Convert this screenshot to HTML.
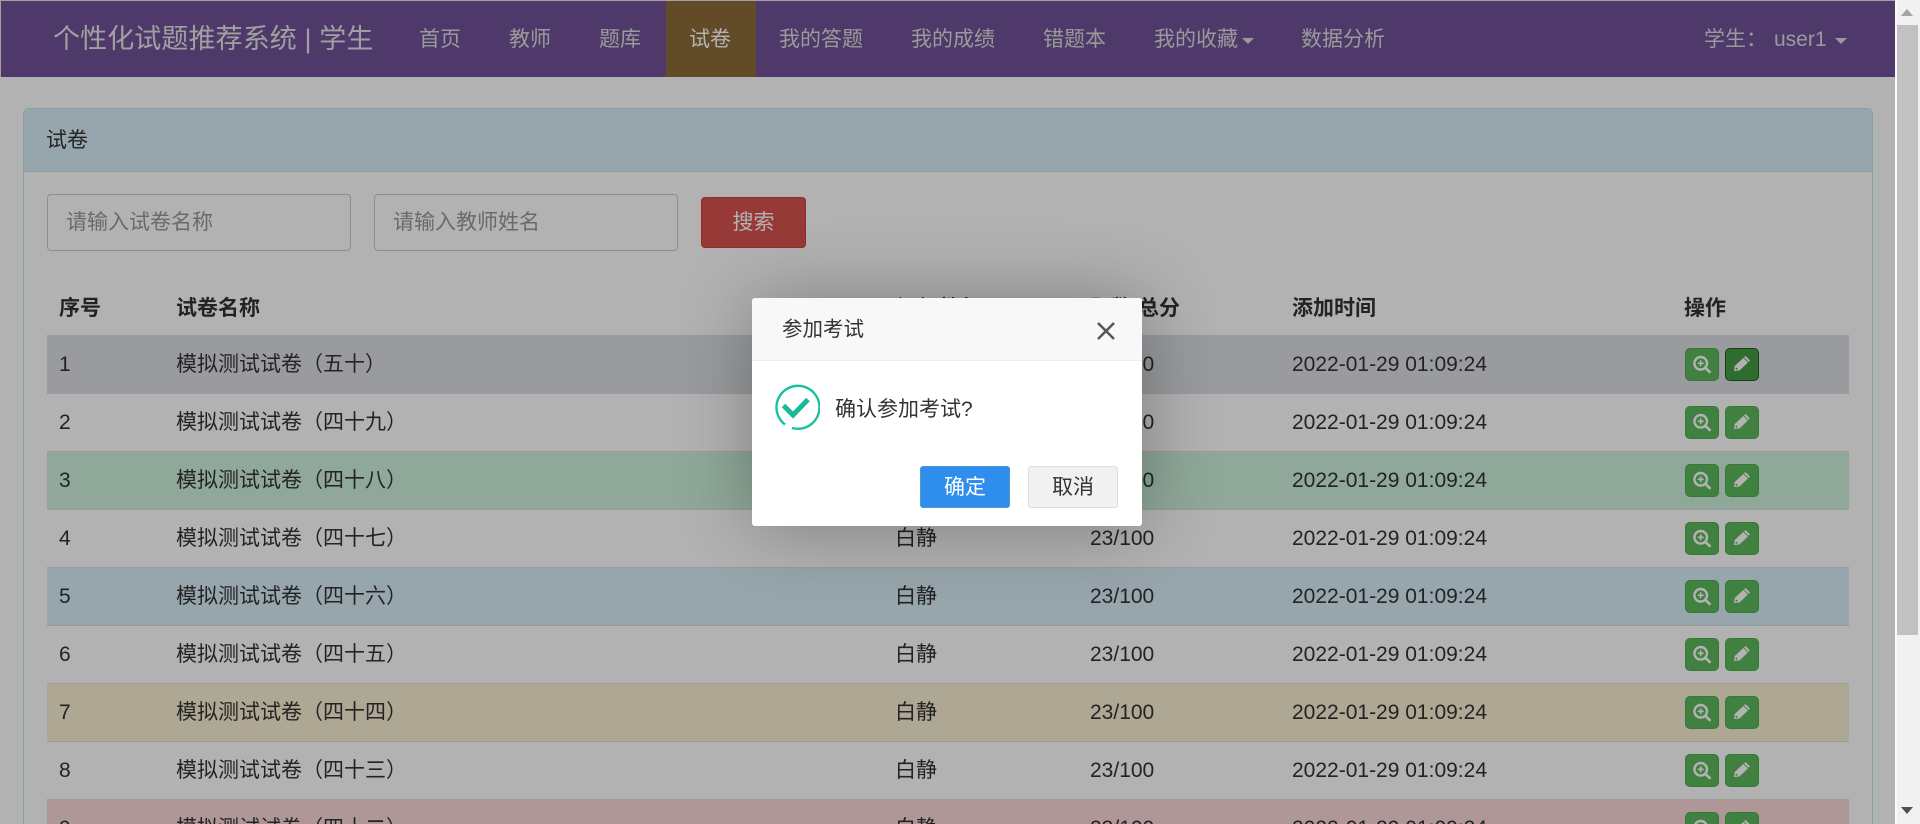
<!DOCTYPE html>
<html lang="zh-CN">
<head>
<meta charset="utf-8">
<title>试卷</title>
<style>
*{box-sizing:border-box}
html,body{margin:0;padding:0;width:1920px;height:824px;overflow:hidden;background:#fff;
font-family:"Liberation Sans","Noto Sans CJK SC",sans-serif;font-size:21px;color:#333}
.a{position:absolute;white-space:nowrap}
#page{position:absolute;left:0;top:0;width:1895px;height:824px;overflow:hidden;background:#fff}
#nav{position:absolute;left:0;top:0;width:1895px;height:77px;background:#705298;border:1px solid #e7e7e7;border-width:1px 0 0 1px}
.n{position:absolute;top:0;height:77px;line-height:80px;color:#ddd;white-space:nowrap}
#act{position:absolute;left:666px;top:1px;width:90px;height:76px;background:#8d6c39}
.caret{position:absolute;width:0;height:0;border-left:6px solid transparent;border-right:6px solid transparent;border-top:6px solid #ddd}
#panel{position:absolute;left:23px;top:108px;width:1850px;height:716px;border:1px solid #bce8f1;border-bottom:0;border-radius:6px 6px 0 0;background:#fff}
#ph{position:absolute;left:0;top:0;width:1848px;height:63px;background:#d9edf7;border-bottom:1px solid #bce8f1;border-radius:5px 5px 0 0}
.inp{position:absolute;top:194px;width:304px;height:57px;border:1px solid #ccc;border-radius:4px;background:#fff;color:#999;line-height:56px;padding-left:18px;white-space:nowrap}
#sb{position:absolute;left:701px;top:197px;width:105px;height:51px;background:#d9534f;border:1px solid #d43f3a;border-radius:4px;color:#fff;text-align:center;line-height:50px}
.th{position:absolute;top:291px;height:36px;line-height:36px;font-weight:bold;white-space:nowrap}
.row{position:absolute;left:47px;width:1802px;height:58px;border-top:1px solid #ddd;overflow:hidden}
.c{position:absolute;top:0;height:57px;line-height:57px;white-space:nowrap}
.b{position:absolute;top:12px;width:34px;height:33px;background:#5cb85c;border:1px solid #4cae4c;border-radius:5px}
.b svg{position:absolute;left:-1px;top:-1px}
#ov{position:absolute;left:0;top:0;width:1895px;height:824px;background:rgba(0,0,0,.3)}
#m{position:absolute;left:752px;top:298px;width:390px;height:228px;background:#fff;border-radius:3px;box-shadow:1.5px 1.5px 75px rgba(0,0,0,.3);overflow:hidden}
#mh{position:absolute;left:0;top:0;width:390px;height:63px;background:#f8f8f8;border-bottom:1px solid #eee;line-height:64px;padding-left:30px;color:#333;font-size:20.5px}
.mb{position:absolute;top:168px;width:90px;height:42px;border-radius:3px;text-align:center;line-height:41px;font-size:21px}
#sbar{position:absolute;left:1895px;top:0;width:25px;height:824px;background:#f1f1f1;border-left:2px solid #fbfbfb}
#thumb{position:absolute;left:0;top:25px;width:21px;height:610px;background:#c1c1c1}
</style>
</head>
<body>
<div id="page">
  <div id="nav"></div>
  <div id="act"></div>
  <div class="n" style="left:53px;font-size:27px;line-height:79px;color:#e6e6e6;letter-spacing:.1px">个性化试题推荐系统 | 学生</div>
  <div class="n" style="left:419px">首页</div>
  <div class="n" style="left:509px">教师</div>
  <div class="n" style="left:599px">题库</div>
  <div class="n" style="left:689px;color:#fff">试卷</div>
  <div class="n" style="left:779px">我的答题</div>
  <div class="n" style="left:911px">我的成绩</div>
  <div class="n" style="left:1043px">错题本</div>
  <div class="n" style="left:1154px">我的收藏</div>
  <div class="caret" style="left:1242px;top:38px"></div>
  <div class="n" style="left:1301px">数据分析</div>
  <div class="n" style="left:1704px">学生：</div>
  <div class="n" style="left:1774px">user1</div>
  <div class="caret" style="left:1835px;top:38px"></div>

  <div id="panel"><div id="ph"></div></div>
  <div class="a" style="left:46px;top:123px;line-height:36px;height:36px">试卷</div>
  <div class="inp" style="left:47px">请输入试卷名称</div>
  <div class="inp" style="left:374px">请输入教师姓名</div>
  <div id="sb">搜索</div>

  <div class="th" style="left:59px">序号</div>
  <div class="th" style="left:176px">试卷名称</div>
  <div class="th" style="left:897px">添加教师</div>
  <div class="th" style="left:1090px">题数/总分</div>
  <div class="th" style="left:1292px">添加时间</div>
  <div class="th" style="left:1684px">操作</div>

  <div class="row" style="top:335px;background:#dbdfe3">
    <div class="c" style="left:12px">1</div><div class="c" style="left:129px">模拟测试试卷（五十）</div><div class="c" style="left:848px">白静</div><div class="c" style="left:1043px">23/100</div><div class="c" style="left:1245px">2022-01-29 01:09:24</div>
    <div class="b" style="left:1638px"><svg width="34" height="33" viewBox="0 0 34 33"><circle cx="15.7" cy="15.3" r="6.3" fill="none" stroke="#fff" stroke-width="2.4"/><path d="M12.7 15.300h6M15.700 12.300v6" stroke="#fff" stroke-width="1.6"/><path d="M20.500 20l5 4.800" stroke="#fff" stroke-width="2.6"/></svg></div>
    <div class="b" style="left:1678px;background:#449d44;border-color:#255625"><svg width="34" height="33" viewBox="0 0 34 33"><path d="M9 23l.7-5L20.500 8 25 12.500 14.500 22.500z" fill="#fff"/><path d="M18.700 9.700l4.500 4.500" stroke="#449d44" stroke-width=".8"/><circle cx="11.500" cy="20.800" r="1" fill="#449d44"/></svg></div>
  </div>
  <div class="row" style="top:393px">
    <div class="c" style="left:12px">2</div><div class="c" style="left:129px">模拟测试试卷（四十九）</div><div class="c" style="left:848px">白静</div><div class="c" style="left:1043px">23/100</div><div class="c" style="left:1245px">2022-01-29 01:09:24</div>
    <div class="b" style="left:1638px"><svg width="34" height="33" viewBox="0 0 34 33"><circle cx="15.7" cy="15.3" r="6.3" fill="none" stroke="#fff" stroke-width="2.4"/><path d="M12.7 15.300h6M15.700 12.300v6" stroke="#fff" stroke-width="1.6"/><path d="M20.500 20l5 4.800" stroke="#fff" stroke-width="2.6"/></svg></div>
    <div class="b" style="left:1678px"><svg width="34" height="33" viewBox="0 0 34 33"><path d="M9 23l.7-5L20.500 8 25 12.500 14.500 22.500z" fill="#fff"/><path d="M18.700 9.700l4.500 4.500" stroke="#5cb85c" stroke-width=".8"/><circle cx="11.500" cy="20.800" r="1" fill="#5cb85c"/></svg></div>
  </div>
  <div class="row" style="top:451px;background:#cdf1dc">
    <div class="c" style="left:12px">3</div><div class="c" style="left:129px">模拟测试试卷（四十八）</div><div class="c" style="left:848px">白静</div><div class="c" style="left:1043px">23/100</div><div class="c" style="left:1245px">2022-01-29 01:09:24</div>
    <div class="b" style="left:1638px"><svg width="34" height="33" viewBox="0 0 34 33"><circle cx="15.7" cy="15.3" r="6.3" fill="none" stroke="#fff" stroke-width="2.4"/><path d="M12.7 15.300h6M15.700 12.300v6" stroke="#fff" stroke-width="1.6"/><path d="M20.500 20l5 4.800" stroke="#fff" stroke-width="2.6"/></svg></div>
    <div class="b" style="left:1678px"><svg width="34" height="33" viewBox="0 0 34 33"><path d="M9 23l.7-5L20.500 8 25 12.500 14.500 22.500z" fill="#fff"/><path d="M18.700 9.700l4.500 4.500" stroke="#5cb85c" stroke-width=".8"/><circle cx="11.500" cy="20.800" r="1" fill="#5cb85c"/></svg></div>
  </div>
  <div class="row" style="top:509px">
    <div class="c" style="left:12px">4</div><div class="c" style="left:129px">模拟测试试卷（四十七）</div><div class="c" style="left:848px">白静</div><div class="c" style="left:1043px">23/100</div><div class="c" style="left:1245px">2022-01-29 01:09:24</div>
    <div class="b" style="left:1638px"><svg width="34" height="33" viewBox="0 0 34 33"><circle cx="15.7" cy="15.3" r="6.3" fill="none" stroke="#fff" stroke-width="2.4"/><path d="M12.7 15.300h6M15.700 12.300v6" stroke="#fff" stroke-width="1.6"/><path d="M20.500 20l5 4.800" stroke="#fff" stroke-width="2.6"/></svg></div>
    <div class="b" style="left:1678px"><svg width="34" height="33" viewBox="0 0 34 33"><path d="M9 23l.7-5L20.500 8 25 12.500 14.500 22.500z" fill="#fff"/><path d="M18.700 9.700l4.500 4.500" stroke="#5cb85c" stroke-width=".8"/><circle cx="11.500" cy="20.800" r="1" fill="#5cb85c"/></svg></div>
  </div>
  <div class="row" style="top:567px;background:#d9edf7">
    <div class="c" style="left:12px">5</div><div class="c" style="left:129px">模拟测试试卷（四十六）</div><div class="c" style="left:848px">白静</div><div class="c" style="left:1043px">23/100</div><div class="c" style="left:1245px">2022-01-29 01:09:24</div>
    <div class="b" style="left:1638px"><svg width="34" height="33" viewBox="0 0 34 33"><circle cx="15.7" cy="15.3" r="6.3" fill="none" stroke="#fff" stroke-width="2.4"/><path d="M12.7 15.300h6M15.700 12.300v6" stroke="#fff" stroke-width="1.6"/><path d="M20.500 20l5 4.800" stroke="#fff" stroke-width="2.6"/></svg></div>
    <div class="b" style="left:1678px"><svg width="34" height="33" viewBox="0 0 34 33"><path d="M9 23l.7-5L20.500 8 25 12.500 14.500 22.500z" fill="#fff"/><path d="M18.700 9.700l4.500 4.500" stroke="#5cb85c" stroke-width=".8"/><circle cx="11.500" cy="20.800" r="1" fill="#5cb85c"/></svg></div>
  </div>
  <div class="row" style="top:625px">
    <div class="c" style="left:12px">6</div><div class="c" style="left:129px">模拟测试试卷（四十五）</div><div class="c" style="left:848px">白静</div><div class="c" style="left:1043px">23/100</div><div class="c" style="left:1245px">2022-01-29 01:09:24</div>
    <div class="b" style="left:1638px"><svg width="34" height="33" viewBox="0 0 34 33"><circle cx="15.7" cy="15.3" r="6.3" fill="none" stroke="#fff" stroke-width="2.4"/><path d="M12.7 15.300h6M15.700 12.300v6" stroke="#fff" stroke-width="1.6"/><path d="M20.500 20l5 4.800" stroke="#fff" stroke-width="2.6"/></svg></div>
    <div class="b" style="left:1678px"><svg width="34" height="33" viewBox="0 0 34 33"><path d="M9 23l.7-5L20.500 8 25 12.500 14.500 22.500z" fill="#fff"/><path d="M18.700 9.700l4.500 4.500" stroke="#5cb85c" stroke-width=".8"/><circle cx="11.500" cy="20.800" r="1" fill="#5cb85c"/></svg></div>
  </div>
  <div class="row" style="top:683px;background:#f9efd4">
    <div class="c" style="left:12px">7</div><div class="c" style="left:129px">模拟测试试卷（四十四）</div><div class="c" style="left:848px">白静</div><div class="c" style="left:1043px">23/100</div><div class="c" style="left:1245px">2022-01-29 01:09:24</div>
    <div class="b" style="left:1638px"><svg width="34" height="33" viewBox="0 0 34 33"><circle cx="15.7" cy="15.3" r="6.3" fill="none" stroke="#fff" stroke-width="2.4"/><path d="M12.7 15.300h6M15.700 12.300v6" stroke="#fff" stroke-width="1.6"/><path d="M20.500 20l5 4.800" stroke="#fff" stroke-width="2.6"/></svg></div>
    <div class="b" style="left:1678px"><svg width="34" height="33" viewBox="0 0 34 33"><path d="M9 23l.7-5L20.500 8 25 12.500 14.500 22.500z" fill="#fff"/><path d="M18.700 9.700l4.500 4.500" stroke="#5cb85c" stroke-width=".8"/><circle cx="11.500" cy="20.800" r="1" fill="#5cb85c"/></svg></div>
  </div>
  <div class="row" style="top:741px">
    <div class="c" style="left:12px">8</div><div class="c" style="left:129px">模拟测试试卷（四十三）</div><div class="c" style="left:848px">白静</div><div class="c" style="left:1043px">23/100</div><div class="c" style="left:1245px">2022-01-29 01:09:24</div>
    <div class="b" style="left:1638px"><svg width="34" height="33" viewBox="0 0 34 33"><circle cx="15.7" cy="15.3" r="6.3" fill="none" stroke="#fff" stroke-width="2.4"/><path d="M12.7 15.300h6M15.700 12.300v6" stroke="#fff" stroke-width="1.6"/><path d="M20.500 20l5 4.800" stroke="#fff" stroke-width="2.6"/></svg></div>
    <div class="b" style="left:1678px"><svg width="34" height="33" viewBox="0 0 34 33"><path d="M9 23l.7-5L20.500 8 25 12.500 14.500 22.500z" fill="#fff"/><path d="M18.700 9.700l4.500 4.500" stroke="#5cb85c" stroke-width=".8"/><circle cx="11.500" cy="20.800" r="1" fill="#5cb85c"/></svg></div>
  </div>
  <div class="row" style="top:799px;height:25px;background:#fbd9d8">
    <div class="c" style="left:12px">9</div><div class="c" style="left:129px">模拟测试试卷（四十二）</div><div class="c" style="left:848px">白静</div><div class="c" style="left:1043px">23/100</div><div class="c" style="left:1245px">2022-01-29 01:09:24</div>
    <div class="b" style="left:1638px"><svg width="34" height="33" viewBox="0 0 34 33"><circle cx="15.7" cy="15.3" r="6.3" fill="none" stroke="#fff" stroke-width="2.4"/><path d="M12.7 15.300h6M15.700 12.300v6" stroke="#fff" stroke-width="1.6"/><path d="M20.500 20l5 4.800" stroke="#fff" stroke-width="2.6"/></svg></div>
    <div class="b" style="left:1678px"><svg width="34" height="33" viewBox="0 0 34 33"><path d="M9 23l.7-5L20.500 8 25 12.500 14.500 22.500z" fill="#fff"/><path d="M18.700 9.700l4.500 4.500" stroke="#5cb85c" stroke-width=".8"/><circle cx="11.500" cy="20.800" r="1" fill="#5cb85c"/></svg></div>
  </div>

  <div id="ov"></div>

  <div id="m">
    <div id="mh">参加考试</div>
    <svg class="a" style="left:344px;top:23px" width="20" height="20" viewBox="0 0 20 20"><path d="M2 2l16 16M18 2L2 18" stroke="#56565f" stroke-width="2.600" fill="none"/></svg>
    <svg class="a" style="left:20px;top:85px" width="48" height="48" viewBox="0 0 48 48">
      <path d="M13 41.500A21.500 21.500 0 1 1 20 45" fill="none" stroke="#1bc0a0" stroke-width="2.400"/>
      <path d="M20 45.200Q23 45.800 26 45.500" fill="none" stroke="#1bc0a0" stroke-width="1.800" opacity=".7"/>
      <path d="M11.500 22.500l9.500 9.500L36 16.500" fill="none" stroke="#1bb99a" stroke-width="5"/>
    </svg>
    <div class="a" style="left:83px;top:94px;height:36px;line-height:36px;color:#333">确认参加考试?</div>
    <div class="mb" style="left:168px;background:#2e8ded;border:1px solid #4898d5;color:#fff">确定</div>
    <div class="mb" style="left:276px;background:#f1f1f1;border:1px solid #dedede;color:#333">取消</div>
  </div>
</div>
<div id="sbar">
  <div id="thumb"></div>
  <div class="a" style="left:4px;top:9px;width:0;height:0;border-left:6.500px solid transparent;border-right:6.500px solid transparent;border-bottom:7px solid #a3a3a3"></div>
  <div class="a" style="left:4px;top:807px;width:0;height:0;border-left:6.500px solid transparent;border-right:6.500px solid transparent;border-top:7px solid #505050"></div>
</div>
</body>
</html>
